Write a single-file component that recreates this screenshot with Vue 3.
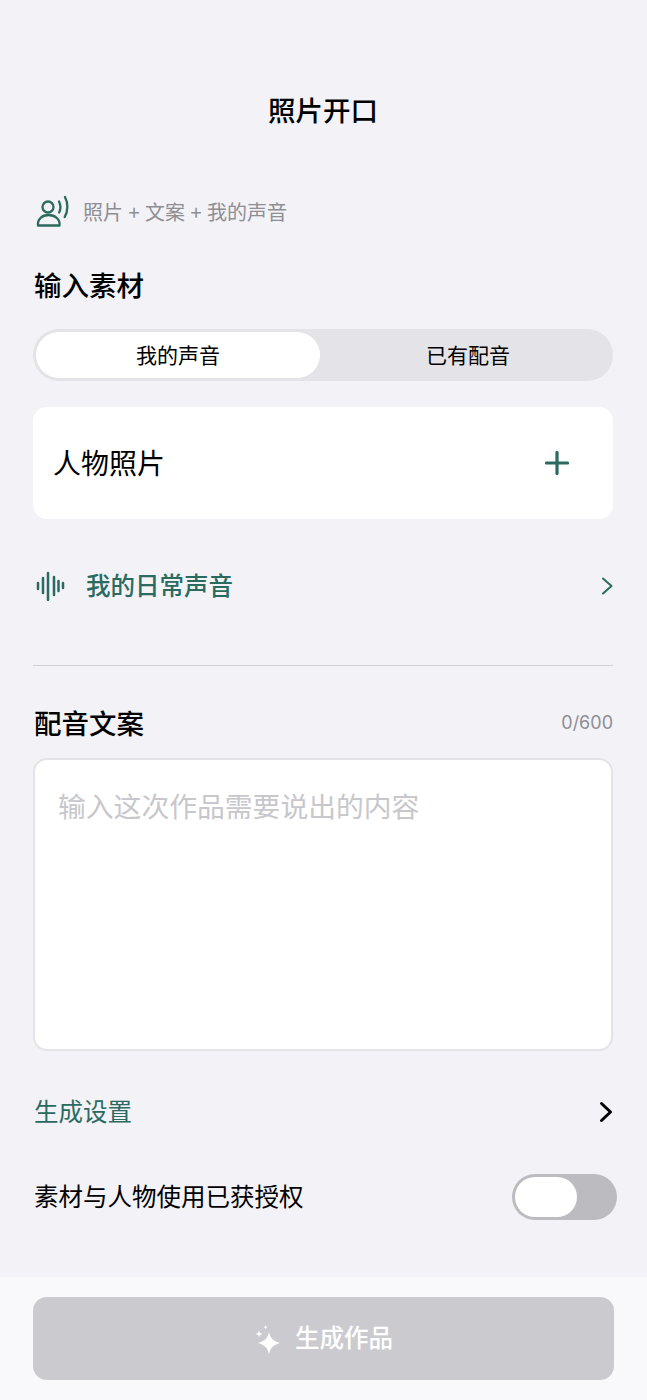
<template>
  <div class="page">
    <main class="content">
      <h1 class="title">照片开口</h1>

      <div class="flow">
        <svg class="flow-icon" width="34" height="32" viewBox="0 0 34 32" fill="none" stroke="#2b6a5f" stroke-width="2.300" stroke-linecap="round">
          <circle cx="12" cy="12" r="5.500" />
          <path d="M2 30.500c-.8-6 4-10.500 10.500-10.500s12 4.500 11 10.500z" stroke-linejoin="round" />
          <path d="M23 6.500c1.800 3.500 1.800 7.500.2 11" />
          <path d="M29 2c3.200 6 3.200 14-.3 20" />
        </svg>
        <span>照片 + 文案 + 我的声音</span>
      </div>

      <h2 class="section-title source-title">输入素材</h2>

      <div class="tabs">
        <button class="tab active">我的声音</button>
        <button class="tab">已有配音</button>
      </div>

      <div class="photo-card">
        <span class="photo-label">人物照片</span>
        <svg width="24" height="24" viewBox="0 0 24 24" stroke="#2b6a5f" stroke-width="3.200" stroke-linecap="round">
          <path d="M12 1.500v21M1.500 12h21" />
        </svg>
      </div>

      <div class="voice-row">
        <svg width="29" height="30" viewBox="0 0 29 30" stroke="#2b6a5f" stroke-width="2.500" stroke-linecap="round">
          <path d="M2 12v6M7 7v15M12 2v27M18 6v18M22.500 10v10M27 12v5" />
        </svg>
        <span class="voice-name">我的日常声音</span>
        <svg class="voice-arrow" width="12" height="20" viewBox="0 0 12 20" fill="none" stroke="#2b6a5f" stroke-width="2" stroke-linecap="round" stroke-linejoin="round">
          <path d="M2 2.500l8.500 7.500L2 17.500" />
        </svg>
      </div>

      <div class="divider"></div>

      <div class="script-head">
        <h2 class="section-title">配音文案</h2>
        <span class="count">0/600</span>
      </div>

      <div class="script-box">输入这次作品需要说出的内容</div>

      <div class="settings-row">
        <span class="row-label">生成设置</span>
        <svg width="14" height="22" viewBox="0 0 14 22" fill="none" stroke="#000" stroke-width="3" stroke-linecap="round" stroke-linejoin="round">
          <path d="M2.500 2.500l9 8.500-9 8.500" />
        </svg>
      </div>

      <div class="auth-row">
        <span class="row-label">素材与人物使用已获授权</span>
        <div class="switch"><div class="knob"></div></div>
      </div>
    </main>

    <footer class="footer">
      <button class="generate">
        <svg width="28" height="30" viewBox="0 0 28 30" fill="#fff">
          <path d="M15 8c1.200 6 4 9 11 11-7 2-9.800 5-11 11.500-1.200-6.500-4-9.500-11-11.500 7-2 9.800-5 11-11z" />
          <path d="M5 6.500c.4 2.200 1.200 3.100 3.500 3.500-2.300.4-3.100 1.300-3.500 3.500-.4-2.200-1.200-3.100-3.500-3.500 2.300-.4 3.100-1.300 3.500-3.500z" />
          <path d="M11.500 1c.2 1.400.7 2 2.200 2.300-1.500.3-2 .9-2.200 2.300-.2-1.400-.7-2-2.200-2.300 1.500-.3 2-.9 2.200-2.300z" />
        </svg>
        <span class="generate-label">生成作品</span>
      </button>
    </footer>
  </div>
</template>

<script setup>
</script>

<style>
html, body {
  margin: 0;
  background: #f2f2f7;
}
</style>

<style scoped>
.page {
  width: 647px;
  height: 1400px;
  display: flex;
  flex-direction: column;
  background: #f2f2f7;
  font-family: "Noto Sans CJK SC", "Liberation Sans", sans-serif;
  color: #000;
}

.content {
  flex: 1;
  padding: 0 34px 0 33px;
}

.title {
  margin: 0;
  padding-top: 89px;
  font-size: 27.500px;
  line-height: 40px;
  font-weight: 500;
  text-align: center;
}

.flow {
  display: flex;
  align-items: center;
  gap: 13px;
  margin-top: 65px;
  padding-left: 3px;
  height: 34px;
  font-size: 20px;
  word-spacing: 1px;
  color: #8e8e93;
}

.section-title {
  margin: 0;
  padding-left: 1px;
  font-size: 27.500px;
  line-height: 40px;
  font-weight: 500;
}

.source-title {
  margin-top: 36px;
}

.tabs {
  display: flex;
  height: 52px;
  margin-top: 25px;
  padding: 3px 0 3px 3px;
  box-sizing: border-box;
  border-radius: 26px;
  background: #e3e3e8;
}

.tab {
  flex: 1;
  border: none;
  border-radius: 23px;
  background: transparent;
  font-family: inherit;
  font-size: 21px;
  line-height: 44px;
  color: #000;
  padding: 0 0 2px 3px;
}

.tab.active {
  flex: none;
  width: 284px;
  padding: 0 0 2px;
  background: #fff;
}

.photo-card {
  display: flex;
  align-items: center;
  justify-content: space-between;
  height: 112px;
  margin-top: 26px;
  padding: 0 44px 0 20px;
  box-sizing: border-box;
  border-radius: 14px;
  background: #fff;
  font-size: 28px;
}

.photo-label {
  padding-bottom: 2px;
}

.voice-row {
  display: flex;
  align-items: center;
  height: 30px;
  margin-top: 52px;
  padding-left: 3px;
  color: #2b6a5f;
}

.voice-name {
  margin-left: 21px;
  padding-bottom: 4px;
  font-size: 24.500px;
  font-weight: 500;
}

.voice-arrow {
  margin-left: auto;
}

.divider {
  height: 1px;
  margin-top: 64px;
  background: #d1d1d6;
}

.script-head {
  display: flex;
  align-items: center;
  justify-content: space-between;
  margin-top: 36px;
}

.count {
  font-family: "Inter", "Liberation Sans", sans-serif;
  font-size: 18px;
  color: #8e8e93;
}

.script-box {
  height: 293px;
  margin-top: 16px;
  padding: 25px 23px;
  box-sizing: border-box;
  border: 2px solid #e3e3e8;
  border-radius: 14px;
  background: #fff;
  font-size: 27.800px;
  line-height: 40px;
  color: #c7c7cc;
}

.settings-row {
  display: flex;
  align-items: center;
  justify-content: space-between;
  margin-top: 43px;
  height: 36px;
  font-size: 24.500px;
  color: #2b6a5f;
}

.row-label {
  padding: 0 0 4px 1px;
}

.auth-row {
  display: flex;
  align-items: center;
  justify-content: space-between;
  margin-top: 44px;
  margin-right: -4px;
  height: 46px;
  font-size: 24.500px;
}

.switch {
  width: 105px;
  height: 46px;
  padding: 3px;
  box-sizing: border-box;
  border-radius: 23px;
  background: #bcbcc0;
}

.knob {
  width: 62px;
  height: 40px;
  border-radius: 20px;
  background: #fff;
}

.footer {
  height: 123px;
  padding: 20px 33px 0 33px;
  box-sizing: border-box;
  background: #f9f9fc;
}

.generate {
  display: flex;
  align-items: center;
  justify-content: center;
  gap: 13px;
  width: 100%;
  height: 83px;
  border: none;
  border-radius: 14px;
  background: #cbcbcf;
  color: #fff;
  font-family: inherit;
  font-size: 24.500px;
  font-weight: 500;
}

.generate-label {
  padding-bottom: 4px;
}
</style>
